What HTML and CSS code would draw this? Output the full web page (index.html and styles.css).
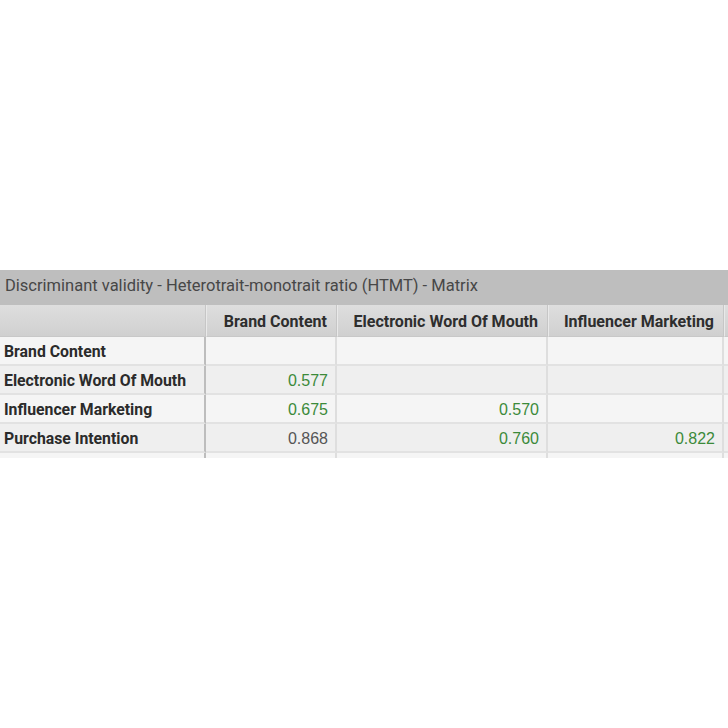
FILE: index.html
```html
<!DOCTYPE html>
<html>
<head>
<meta charset="utf-8">
<link rel="stylesheet" href="styles.css">
</head>
<body>
<div class="panel">
  <div class="title">Discriminant validity - Heterotrait-monotrait ratio (HTMT) - Matrix</div>
  <div class="grid">
    <div class="hd first"></div>
    <div class="hd">Brand Content</div>
    <div class="hd">Electronic Word Of Mouth</div>
    <div class="hd">Influencer Marketing</div>
    <div class="hd last"></div>

    <div class="c lbl r1">Brand Content</div>
    <div class="c num r1 sep"></div>
    <div class="c num r1"></div>
    <div class="c num r1"></div>
    <div class="c num r1"></div>

    <div class="c lbl r2">Electronic Word Of Mouth</div>
    <div class="c num r2 sep g">0.577</div>
    <div class="c num r2"></div>
    <div class="c num r2"></div>
    <div class="c num r2"></div>

    <div class="c lbl r1">Influencer Marketing</div>
    <div class="c num r1 sep g">0.675</div>
    <div class="c num r1 g">0.570</div>
    <div class="c num r1"></div>
    <div class="c num r1"></div>

    <div class="c lbl r2">Purchase Intention</div>
    <div class="c num r2 sep k">0.868</div>
    <div class="c num r2 g">0.760</div>
    <div class="c num r2 g">0.822</div>
    <div class="c num r2"></div>

    <div class="c lbl r1"></div>
    <div class="c num r1 sep"></div>
    <div class="c num r1"></div>
    <div class="c num r1"></div>
    <div class="c num r1"></div>
  </div>
</div>
</body>
</html>
```
FILE: styles.css
```css
html, body {
  margin: 0;
  padding: 0;
  background: #fff;
}
body {
  padding-top: 270px;
}
.panel {
  width: 728px;
  height: 188px;
  overflow: hidden;
}
.title {
  height: 35px;
  background: #bebebe;
  color: #474747;
  font-family: Roboto, "Liberation Sans", sans-serif;
  font-size: 16.5px;
  line-height: 31px;
  padding-left: 5px;
  white-space: nowrap;
}
.grid {
  display: grid;
  grid-template-columns: 206px 131px 211px 176px 60px;
  grid-auto-rows: 29px;
  grid-template-rows: 32px;
  width: 784px;
}
.hd {
  background: linear-gradient(#dedede, #d0d0d0);
  border-left: 1px solid #e9e9e9;
  border-right: 1px solid #c6c6c6;
  border-bottom: 1px solid #c8c8c8;
  font-family: Roboto, "Liberation Sans", sans-serif;
  font-weight: 700;
  font-size: 16px;
  color: #2e2e2e;
  text-align: right;
  padding-right: 9px;
  line-height: 33px;
  white-space: nowrap;
  box-sizing: border-box;
}
.hd.first {
  border-left: none;
}
.c {
  box-sizing: border-box;
  border-bottom: 2px solid #e2e2e2;
  border-right: 2px solid #dedede;
  line-height: 29px;
  white-space: nowrap;
}
.r1 { background: #f5f5f5; }
.r2 { background: #efefef; }
.lbl {
  font-family: Roboto, "Liberation Sans", sans-serif;
  font-weight: 700;
  font-size: 15.8px;
  color: #2b2b2b;
  padding-left: 4px;
  border-right: 2px solid #bdbdbd;
}
.num {
  font-family: "Liberation Sans", Arial, sans-serif;
  font-size: 16px;
  text-align: right;
  padding-right: 7px;
}
.g { color: #3c8a3a; }
.k { color: #555; }
```
